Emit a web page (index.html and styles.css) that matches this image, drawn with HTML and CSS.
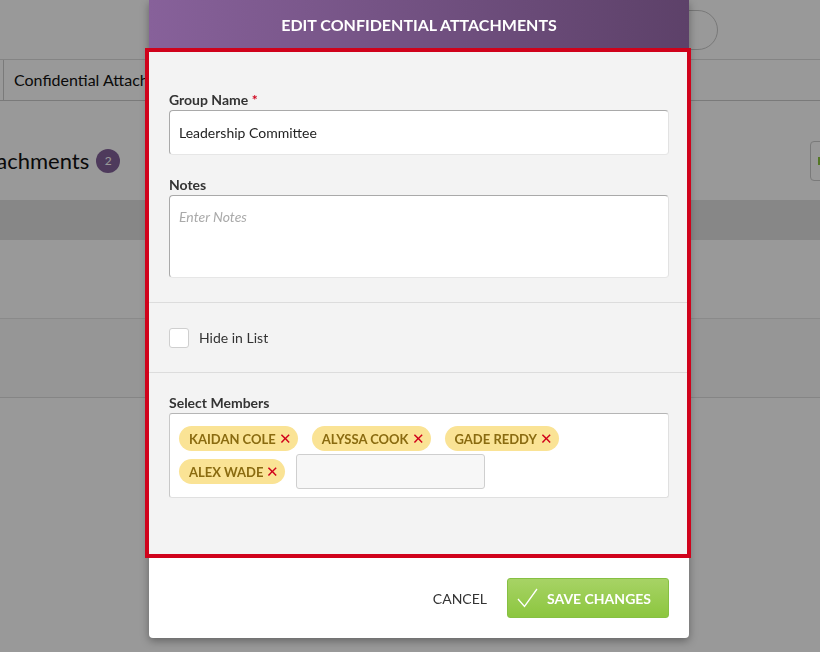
FILE: index.html
```html
<!DOCTYPE html>
<html lang="en">
<head>
    <meta charset="UTF-8">
    <meta name="viewport" content="width=device-width, initial-scale=1.0">
    <title>Edit Confidential Attachments</title>
    <link rel="stylesheet" href="styles.css">
</head>
<body>

<div class="page">
    <div class="topbar">
        <div class="search-pill"></div>
    </div>
    <div class="tabs">
        <div class="tab">Confidential Attachments</div>
    </div>
    <div class="heading-row">
        <h1 class="page-title">Attachments <span class="count">2</span></h1>
        <div class="side-button"><span class="side-dot"></span></div>
    </div>
    <div class="table-head"></div>
    <div class="table-row"></div>
    <div class="table-row alt"></div>
</div>

<div class="overlay"></div>

<div class="modal">
    <div class="modal-header">EDIT CONFIDENTIAL ATTACHMENTS</div>

    <div class="modal-body">
        <div class="section">
            <label class="field-label">Group Name <span class="req">*</span></label>
            <div class="text-input">Leadership Committee</div>

            <label class="field-label notes-label">Notes</label>
            <div class="text-area placeholder">Enter Notes</div>
        </div>

        <div class="section check-section">
            <span class="checkbox"></span>
            <span class="check-text">Hide in List</span>
        </div>

        <div class="section members-section">
            <label class="field-label">Select Members</label>
            <div class="tag-box">
                <span class="tag">KAIDAN COLE <span class="tag-x">&#x2715;</span></span>
                <span class="tag">ALYSSA COOK <span class="tag-x">&#x2715;</span></span>
                <span class="tag">GADE REDDY <span class="tag-x">&#x2715;</span></span>
                <span class="tag">ALEX WADE <span class="tag-x">&#x2715;</span></span>
                <span class="tag-input"></span>
            </div>
        </div>
    </div>

    <div class="modal-footer">
        <button class="btn-cancel">CANCEL</button>
        <button class="btn-save">
            <svg width="21" height="20" viewBox="0 0 21 20"><path d="M1 11 L7.5 18.5 L20 1" fill="none" stroke="#fff" stroke-width="1.3"/></svg>
            SAVE CHANGES
        </button>
    </div>
</div>

</body>
</html>
```

FILE: styles.css
```css
body {
    margin: 0;
    height: 652px;
    overflow: hidden;
    background-color: #fff;
    font-family: Lato, "Noto Sans", sans-serif;
    color: #222;
}

/* page underneath the dialog */
.topbar {
    height: 60px;
    border-bottom: 1px solid #dcdcdc;
    box-sizing: border-box;
    display: flex;
    align-items: center;
    justify-content: flex-end;
    padding-right: 102px;
}
.search-pill {
    width: 260px;
    height: 40px;
    border: 1px solid #c9c9c9;
    border-radius: 20px;
    box-sizing: border-box;
}
.tabs {
    height: 41px;
    border-bottom: 1px solid #ccc;
    box-sizing: border-box;
    display: flex;
    padding-left: 3px;
}
.tab {
    border-left: 1px solid #ccc;
    padding: 0 10px;
    line-height: 40px;
    font-size: 16px;
    white-space: nowrap;
    color: #111;
}
.heading-row {
    height: 99px;
    box-sizing: border-box;
    padding-top: 20px;
    display: flex;
    align-items: center;
    justify-content: space-between;
}
.page-title {
    margin: 0 0 0 -33px;
    font-size: 22px;
    font-weight: 400;
    color: #111;
    display: flex;
    align-items: center;
    gap: 7px;
}
.count {
    width: 24px;
    height: 24px;
    border-radius: 50%;
    background-color: #826199;
    color: #fff;
    font-size: 12px;
    display: flex;
    align-items: center;
    justify-content: center;
}
.side-button {
    width: 40px;
    height: 40px;
    margin-right: -30px;
    border: 1px solid #ccc;
    border-radius: 4px;
    box-sizing: border-box;
    display: flex;
    align-items: center;
    padding-left: 7px;
}
.side-dot {
    width: 6px;
    height: 8px;
    background-color: #8cc63f;
}
.table-head {
    height: 40px;
    background-color: #e1e1e1;
}
.table-row {
    height: 78px;
    border-bottom: 1px solid #e6e6e6;
}
.table-row.alt {
    background-color: #fafafa;
    border-bottom-color: #dedede;
}
.overlay {
    position: fixed;
    top: 0;
    left: 0;
    right: 0;
    bottom: 0;
    background: rgba(0, 0, 0, 0.4);
}

/* dialog */
.modal {
    position: absolute;
    top: 0;
    left: 149px;
    width: 540px;
    background: #fff;
    border-radius: 0 0 4px 4px;
    box-shadow: 0 3px 8px rgba(0, 0, 0, 0.35);
}
.modal-header {
    height: 48px;
    line-height: 50px;
    text-align: center;
    color: #fff;
    font-weight: 700;
    font-size: 16px;
    background: linear-gradient(to right, #87619a, #5d4169);
}
.modal-body {
    margin: 0 -2px 0 -4px;
    border: 4px solid #d0021b;
    background-color: #f3f3f3;
}
.section {
    padding: 0 18px 0 20px;
    border-bottom: 1px solid #dcdcdc;
}
.section:first-child {
    padding-top: 39px;
    padding-bottom: 24px;
}
.field-label {
    display: block;
    font-size: 14px;
    font-weight: 700;
    color: #333;
    line-height: 17px;
    margin-bottom: 2px;
}
.notes-label {
    margin-top: 21px;
}
.req {
    color: #d0021b;
}
.text-input,
.text-area {
    background-color: #fff;
    border: 1px solid;
    border-color: #a9a9a9 #e2e2e2 #e6e6e6 #a9a9a9;
    border-radius: 4px;
    font-size: 14px;
    padding: 0 9px;
}
.text-input {
    height: 43px;
    line-height: 43px;
}
.text-area {
    line-height: 1;
    padding-top: 14px;
    box-sizing: border-box;
    height: 83px;
}
.placeholder {
    color: #aaa;
    font-style: italic;
}
.check-section {
    height: 69px;
    display: flex;
    align-items: center;
    gap: 10px;
}
.checkbox {
    width: 18px;
    height: 18px;
    background-color: #fff;
    border: 1px solid #cfcfcf;
    border-radius: 3px;
}
.check-text {
    font-size: 14px;
    color: #333;
}
.members-section {
    border-bottom: none;
    padding-top: 21px;
    padding-bottom: 56px;
}
.tag-box {
    background-color: #fff;
    border: 1px solid;
    border-color: #b5b5b5 #e0e0e0 #e0e0e0 #c8c8c8;
    border-radius: 3px;
    padding: 12px 9px 8px;
    display: flex;
    flex-wrap: wrap;
    align-items: center;
    gap: 3px 14px;
}
.tag {
    height: 25px;
    border-radius: 13px;
    background-color: #fae395;
    color: #8a6b10;
    font-size: 13px;
    font-weight: 700;
    padding: 0 6px 0 10px;
    display: flex;
    align-items: center;
    gap: 3px;
}
.tag-x {
    color: #d0021b;
    font-size: 15px;
    font-weight: 400;
}
.tag-input {
    width: 187px;
    height: 33px;
    margin-left: -3px;
    background-color: #f7f7f7;
    border: 1px solid #cfcfcf;
    border-radius: 3px;
}
.modal-footer {
    height: 80px;
    display: flex;
    align-items: center;
    justify-content: flex-end;
    gap: 20px;
    padding-right: 20px;
}
button {
    font-family: Lato, "Noto Sans", sans-serif;
    font-size: 14px;
    cursor: pointer;
}
.btn-cancel {
    background: none;
    border: none;
    color: #333;
    padding: 0;
}
.btn-save {
    width: 162px;
    height: 40px;
    border: 1px solid #86c043;
    border-radius: 3px;
    background: linear-gradient(#a7d365, #8cc63f);
    color: #fff;
    font-weight: 700;
    display: flex;
    align-items: center;
    gap: 9px;
    padding: 0 0 0 9px;
}
```
